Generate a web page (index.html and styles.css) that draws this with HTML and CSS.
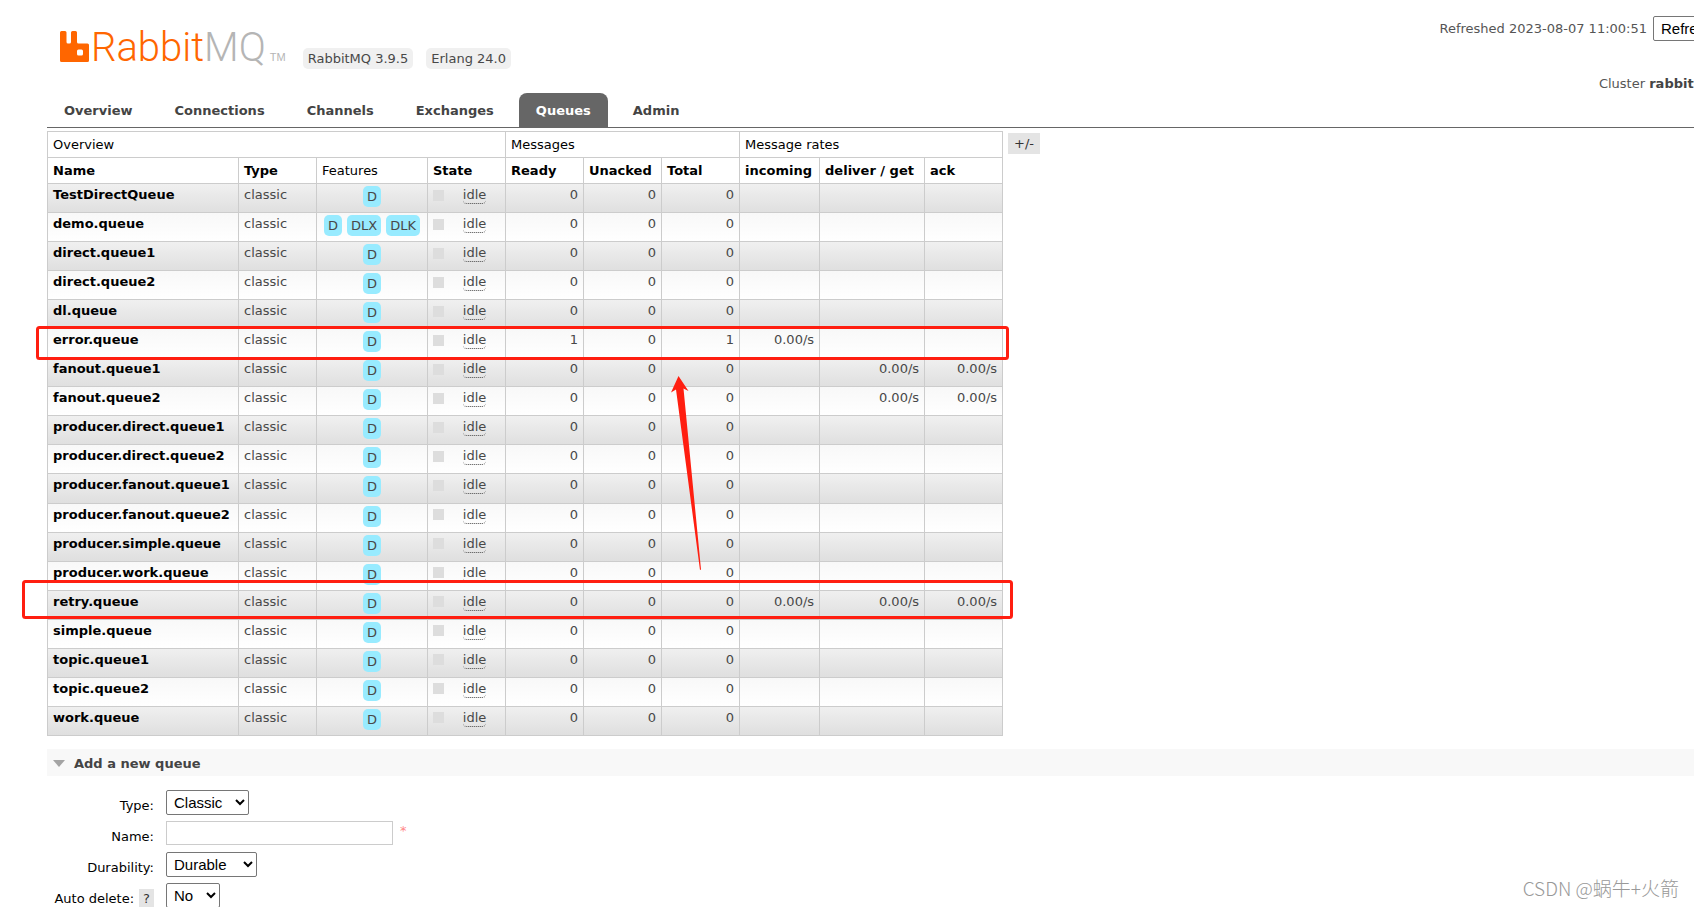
FILE: index.html
```html
<!DOCTYPE html>
<html lang="en">
<head>
<meta charset="utf-8">
<title>RabbitMQ Management</title>
<link rel="stylesheet" href="styles.css">
</head>
<body>
<header class="header">
  <div class="brand">
    <a class="logo" href="#" aria-label="RabbitMQ">
      <svg class="logo-mark" viewBox="0 0 29 31" aria-hidden="true"><path fill="#f60" fill-rule="evenodd" d="M1.500 0H5Q6.500 0 6.500 1.500V11Q6.500 12.500 8 12.500H9.500Q11 12.500 11 11V1.500Q11 0 12.500 0H15.500Q17 0 17 1.500V11Q17 12.500 18.500 12.500H27.500Q29 12.500 29 14V29.500Q29 31 27.500 31H1.500Q0 31 0 29.500V1.500Q0 0 1.500 0ZM18.500 18.500Q17 18.500 17 20V23Q17 24.500 18.500 24.500H21.500Q23 24.500 23 23V20Q23 18.500 21.500 18.500Z"/></svg>
      <span class="logo-text">Rabbit<span class="logo-mq">MQ</span></span>
      <span class="logo-tm">TM</span>
    </a>
    <span class="version">RabbitMQ 3.9.5</span>
    <span class="version">Erlang 24.0</span>
  </div>
  <div class="status">
    <div class="refresh">
      <label for="refresh">Refreshed 2023-08-07 11:00:51</label>
      <select id="refresh" class="select"><option>Refresh every 5 seconds</option></select>
    </div>
    <div class="cluster">Cluster <b>rabbit@rabbitmq</b></div>
  </div>
</header>
<nav class="tabs">
  <a class="tab" href="#">Overview</a>
  <a class="tab" href="#">Connections</a>
  <a class="tab" href="#">Channels</a>
  <a class="tab" href="#">Exchanges</a>
  <a class="tab tab-selected" href="#">Queues</a>
  <a class="tab" href="#">Admin</a>
</nav>
<main class="main">
  <div class="list">
    <table class="queues">
      <colgroup><col class="c-name"><col class="c-std"><col class="c-features"><col class="c-std"><col class="c-std"><col class="c-std"><col class="c-std"><col class="c-in"><col class="c-deliver"><col class="c-std"></colgroup>
      <thead>
        <tr><th colspan="4">Overview</th><th colspan="3">Messages</th><th colspan="3">Message rates</th></tr>
        <tr><th><a href="#">Name</a></th><th><a href="#">Type</a></th><th>Features</th><th><a href="#">State</a></th><th><a href="#">Ready</a></th><th><a href="#">Unacked</a></th><th><a href="#">Total</a></th><th><a href="#">incoming</a></th><th><a href="#">deliver / get</a></th><th><a href="#">ack</a></th></tr>
      </thead>
      <tbody id="rows"></tbody>
    </table>
    <button class="columns" type="button">+/-</button>
  </div>
  <h2 class="section">Add a new queue</h2>
  <form class="form">
    <label class="label" for="type">Type:</label>
    <div class="field"><select id="type" class="select w-type"><option>Classic</option></select></div>
    <label class="label" for="name">Name:</label>
    <div class="field"><input id="name" class="input" type="text"><span class="required">*</span></div>
    <label class="label" for="durability">Durability:</label>
    <div class="field"><select id="durability" class="select w-durability"><option>Durable</option></select></div>
    <div class="label"><label for="autodelete">Auto delete:</label><button class="help" type="button">?</button></div>
    <div class="field"><select id="autodelete" class="select w-auto"><option>No</option></select></div>
  </form>
</main>
<svg class="marks" width="1100" height="700" aria-hidden="true">
  <g fill="none" stroke="#ff1e10" stroke-width="3"><rect x="37.500" y="327.500" width="970" height="31" rx="2"/><rect x="23.500" y="581.500" width="988" height="36" rx="2"/></g>
  <path fill="#ff1e10" d="M678.500 376L688.500 391L683.500 388.500L701 569.500L700 570L676 389.500L671 392.500Z"/>
</svg>
<div class="watermark">CSDN @蜗牛+火箭</div>
<script src="app.js"></script>
</body>
</html>
```

FILE: styles.css
```css
* { box-sizing: border-box; }
html, body { height: 100%; overflow: hidden; }
body { margin: 0; position: relative; background: #fff; color: #484848; font: 13px/16px "DejaVu Sans", sans-serif; }
a { color: inherit; text-decoration: none; }
button { border: 0; font: inherit; }

.header { display: flex; justify-content: space-between; height: 93px; padding-left: 60px; white-space: nowrap; }
.brand { display: flex; align-items: flex-start; gap: 13px; }
.brand .version { margin-top: 48px; padding: 3px 5px 2px; border-radius: 5px; background: #f0f0f0; }
.logo { display: flex; margin-top: 31px; height: 31px; margin-right: 4px; }
.logo-mark { width: 29px; height: 31px; }
.logo-text { margin-left: 2px; font: 300 40px/33px "Roboto", sans-serif; color: #f60; }
.logo-mq { color: #b5b5b5; }
.logo-tm { align-self: flex-end; margin-left: 4px; font: 11px/9px "Liberation Sans", sans-serif; color: #b5b5b5; }

.status { display: flex; flex-direction: column; align-items: flex-end; margin-right: -153px; padding-top: 16px; color: #555; }
.refresh { display: flex; align-items: center; gap: 6px; }
.cluster { margin-top: 35px; padding-right: 73px; }
.cluster b { color: #444; }

.tabs { display: flex; gap: 8px; margin-left: 47px; border-bottom: 1px solid #666; }
.tab { padding: 10px 17px 8px; font-weight: bold; color: #444; }
.tab-selected { border-radius: 8px 8px 0 0; background: #666; color: #fff; }

.main { padding: 3px 0 0 47px; }
.list { display: flex; align-items: flex-start; gap: 5px; }
.queues { width: 956px; height: 605px; flex: none; table-layout: fixed; border-collapse: collapse; }
.queues .c-name { width: 191px; }
.queues .c-std { width: 78px; }
.queues .c-features { width: 111px; }
.queues .c-in { width: 80px; }
.queues .c-deliver { width: 105px; }
.queues th, .queues td { border: 1px solid #ccc; white-space: nowrap; vertical-align: top; }
.queues th { height: 26px; padding: 5px; text-align: left; font-weight: normal; color: #000; line-height: 15px; }
.queues th a, .name { font-weight: bold; color: #000; }
.queues td { height: 29px; padding: 2px 5px; line-height: 18px; }
.queues tbody tr { background: linear-gradient(#f8f8f8, #fff); }
.queues tbody tr:nth-child(odd) { background: linear-gradient(#f0f0f0, #dfdfdf); }
.queues .num { text-align: right; }
.features { display: flex; justify-content: center; gap: 5px; }
.feature { padding: 3px 4px 2px; border-radius: 5px; background: #98ebff; line-height: 16px; }
.state { display: flex; align-items: center; gap: 5px; }
.state::before { content: ""; width: 11px; height: 11px; background: #ddd; }
.state abbr { margin: 0 auto; border-bottom: 1px dotted #484848; border-radius: 4px; text-decoration: none; line-height: 17px; }
.columns { margin-top: 2px; height: 21px; padding: 0 6px; background: #e4e4e4; color: #333; }

.section { display: flex; align-items: center; gap: 9px; height: 27px; margin: 13px 0 0; padding: 2px 0 0 6px; background: #f8f8f8; font-size: 13px; color: #444; }
.section::before { content: ""; border: 6px solid transparent; border-top: 7px solid #a4a4a4; border-bottom: 0; }

.form { display: grid; grid-template-columns: 107px 1fr; column-gap: 12px; grid-auto-rows: 31px; margin-top: 14px; color: #000; }
.label { padding-top: 8px; text-align: right; white-space: nowrap; }
.help { height: 20px; margin: -2px 0 -2px 5px; padding: 0 4px; background: #e4e4e4; color: #333; }
.field { display: flex; align-items: flex-start; gap: 7px; }
.select { height: 25px; padding: 0 3px; border: 1px solid #767676; border-radius: 2px; background: #fff; color: #000; font: 15px "Liberation Sans", Arial, sans-serif; }
.w-type { width: 83px; }
.w-durability { width: 91px; }
.w-auto { width: 54px; }
.input { width: 227px; height: 24px; border: 1px solid #ccc; font: 15px "Liberation Sans", Arial, sans-serif; }
.required { padding-top: 2px; color: #f88; }

.marks { position: absolute; left: 0; top: 0; pointer-events: none; }
.watermark { position: absolute; right: 15px; bottom: 7px; font: 300 19px/24px "Noto Sans CJK SC", sans-serif; color: #999; }
```

FILE: app.js
```js
const queues = [
  { name: "TestDirectQueue" },
  { name: "demo.queue", features: ["D", "DLX", "DLK"] },
  { name: "direct.queue1" },
  { name: "direct.queue2" },
  { name: "dl.queue" },
  { name: "error.queue", ready: 1, rates: ["0.00/s", "", ""] },
  { name: "fanout.queue1", rates: ["", "0.00/s", "0.00/s"] },
  { name: "fanout.queue2", rates: ["", "0.00/s", "0.00/s"] },
  { name: "producer.direct.queue1" },
  { name: "producer.direct.queue2" },
  { name: "producer.fanout.queue1" },
  { name: "producer.fanout.queue2" },
  { name: "producer.simple.queue" },
  { name: "producer.work.queue" },
  { name: "retry.queue", rates: ["0.00/s", "0.00/s", "0.00/s"] },
  { name: "simple.queue" },
  { name: "topic.queue1" },
  { name: "topic.queue2" },
  { name: "work.queue" }
];

document.getElementById("rows").innerHTML = queues.map(q => {
  const { name, features = ["D"], ready = 0, rates = ["", "", ""] } = q;
  const pills = features.map(f => `<span class="feature">${f}</span>`).join("");
  const numbers = [ready, 0, ready, ...rates].map(n => `<td class="num">${n}</td>`).join("");
  return `<tr><td><a class="name" href="#">${name}</a></td><td>classic</td>` +
    `<td><div class="features">${pills}</div></td>` +
    `<td><div class="state"><abbr>idle</abbr></div></td>${numbers}</tr>`;
}).join("");
```
